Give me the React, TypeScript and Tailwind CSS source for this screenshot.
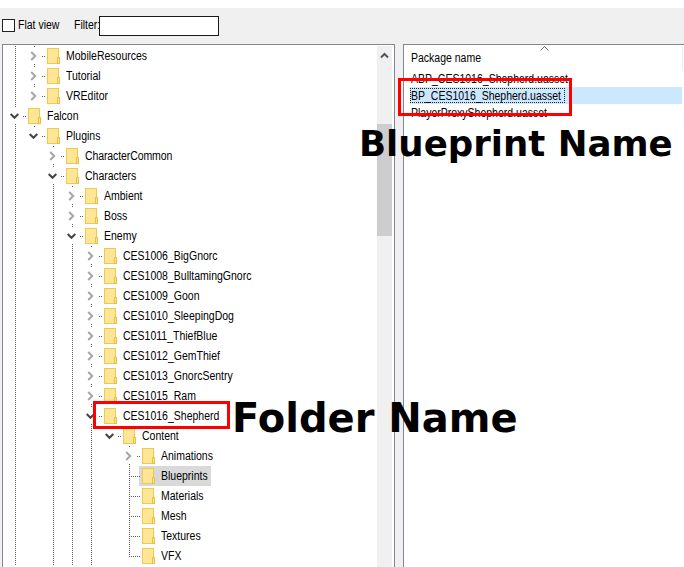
import React from "react";

type Guide = "none" | "line" | "branch" | "last";
type Node = {
  name: string;
  guides: Guide[];
  state: "open" | "closed" | "leaf";
  tracking?: string;
  selected?: boolean;
};

const n: Guide = "none";
const l: Guide = "line";
const b: Guide = "branch";
const e: Guide = "last";

const nodes: Node[] = [
  { name: "MobileResources", guides: [l, b], state: "closed" },
  { name: "Tutorial", guides: [l, b], state: "closed" },
  { name: "VREditor", guides: [l, e], state: "closed" },
  { name: "Falcon", guides: [b], state: "open" },
  { name: "Plugins", guides: [l, e], state: "open" },
  { name: "CharacterCommon", guides: [l, n, b], state: "closed", tracking: "tracking-[-0.12px]" },
  { name: "Characters", guides: [l, n, b], state: "open" },
  { name: "Ambient", guides: [l, n, l, b], state: "closed" },
  { name: "Boss", guides: [l, n, l, b], state: "closed" },
  { name: "Enemy", guides: [l, n, l, b], state: "open" },
  { name: "CES1006_BigGnorc", guides: [l, n, l, l, b], state: "closed" },
  { name: "CES1008_BulltamingGnorc", guides: [l, n, l, l, b], state: "closed" },
  { name: "CES1009_Goon", guides: [l, n, l, l, b], state: "closed" },
  { name: "CES1010_SleepingDog", guides: [l, n, l, l, b], state: "closed" },
  { name: "CES1011_ThiefBlue", guides: [l, n, l, l, b], state: "closed" },
  { name: "CES1012_GemThief", guides: [l, n, l, l, b], state: "closed" },
  { name: "CES1013_GnorcSentry", guides: [l, n, l, l, b], state: "closed" },
  { name: "CES1015_Ram", guides: [l, n, l, l, b], state: "closed" },
  { name: "CES1016_Shepherd", guides: [l, n, l, l, b], state: "open" },
  { name: "Content", guides: [l, n, l, l, l, e], state: "open" },
  { name: "Animations", guides: [l, n, l, l, l, n, b], state: "closed" },
  { name: "Blueprints", guides: [l, n, l, l, l, n, b], state: "leaf", selected: true },
  { name: "Materials", guides: [l, n, l, l, l, n, b], state: "leaf" },
  { name: "Mesh", guides: [l, n, l, l, l, n, b], state: "leaf" },
  { name: "Textures", guides: [l, n, l, l, l, n, b], state: "leaf" },
  { name: "VFX", guides: [l, n, l, l, l, n, e], state: "leaf" },
];

function Label({ children, className = "" }: { children: string; className?: string }) {
  return (
    <span className={`inline-block origin-left scale-x-[0.84] whitespace-pre ${className}`}>{children}</span>
  );
}

function Folder() {
  return (
    <svg className="block shrink-0" width="13" height="16" viewBox="0 0 13 16" shapeRendering="crispEdges">
      <rect x="0.5" y="0.5" width="11" height="15" fill="#ffe696" stroke="#efca4d" />
      <rect x="10.5" y="9.5" width="2" height="6" fill="#ffe391" stroke="#e9c142" />
    </svg>
  );
}

function GuideCell({ guide, state }: { guide: Guide; state?: Node["state"] }) {
  const dash = { stroke: "#5c5c5c", strokeDasharray: "1 1" };
  return (
    <svg className="block shrink-0" width="19" height="20" viewBox="0 0 19 20">
      {guide === "line" || (guide === "branch" && state === "leaf") ? (
        <path d="M9.5 0V20" {...dash} />
      ) : null}
      {guide === "last" && state === "leaf" ? <path d="M9.5 0V11" {...dash} /> : null}
      {state && state !== "leaf" && guide !== "none" ? <path d="M9.5 0V1" {...dash} /> : null}
      {guide === "branch" && state !== "leaf" ? <path d="M9.5 18V20" {...dash} /> : null}
      {state === "leaf" ? <path d="M11 10.5H19" {...dash} /> : null}
      {state === "open" ? <path d="M4.7 8L8.5 11.8L12.3 8" fill="none" stroke="#454545" strokeWidth="2" /> : null}
      {state === "closed" ? <path d="M6.2 6L10.2 10L6.2 14" fill="none" stroke="#a6a6a6" strokeWidth="2" /> : null}
      {state && state !== "leaf" ? <path d="M17 10.5H19" {...dash} /> : null}
    </svg>
  );
}

function TreeRow({ node }: { node: Node }) {
  const last = node.guides.length - 1;
  return (
    <div className="flex h-5 shrink-0 items-center pl-[3px]">
      {node.guides.map((g, i) => (
        <GuideCell key={i} guide={g} state={i === last ? node.state : undefined} />
      ))}
      <div className={`flex h-5 items-center ${node.selected ? "w-[72px] bg-[#d9d9d9]" : ""}`}>
        <svg className="block shrink-0" width="3" height="20">
          <path d="M0 10.5H2" stroke="#5c5c5c" strokeDasharray="1 1" />
        </svg>
        <Folder />
        <Label className={`ml-1.5 leading-5 ${node.tracking ?? ""}`}>{node.name}</Label>
      </div>
    </div>
  );
}

export default function App() {
  return (
    <div className="relative flex h-[567px] w-[684px] flex-col overflow-hidden bg-[#f0f0f0] font-['Liberation_Sans',sans-serif] text-[12.5px] text-black">
      <div className="h-2 shrink-0 bg-white" />
      <div className="flex h-9 shrink-0 items-center pl-0.5">
        <div className="mb-0.5 size-[13px] shrink-0 border border-[#222] bg-white" />
        <div className="mb-0.5 ml-[3px] w-[56px] shrink-0">
          <Label>Flat view</Label>
        </div>
        <div className="mb-0.5 w-[25px] shrink-0">
          <Label>Filter:</Label>
        </div>
        <div className="h-5 w-[120px] border border-[#1b1b1b] bg-white" />
      </div>
      <div className="flex min-h-0 flex-1">
        <div className="ml-0.5 flex w-[393px] shrink-0 overflow-hidden border-x border-t border-[#828790] bg-white">
          <div className="flex w-[374px] shrink-0 flex-col pt-px">
            {nodes.map((node) => (
              <TreeRow key={node.name} node={node} />
            ))}
          </div>
          <div className="mt-px flex w-[15px] shrink-0 flex-col bg-[#f0f0f0]">
            <svg className="block h-[78px] shrink-0" width="15" height="78">
              <path d="M4 11.5L7.5 8L11 11.5" fill="none" stroke="#555" strokeWidth="2" />
            </svg>
            <div className="h-[112px] bg-[#cdcdcd]" />
          </div>
        </div>
        <div className="ml-2 flex min-w-0 flex-1 flex-col border-l border-t border-[#828790] bg-white">
          <div className="flex h-[25px] shrink-0 pl-[7px]">
            <div className="w-[129px] pt-px leading-[25px]">
              <Label>Package name</Label>
            </div>
            <svg className="block" width="10" height="8">
              <path d="M0.5 5.5L4.5 1.5L8.5 5.5" fill="none" stroke="#666" />
            </svg>
            <div className="ml-auto mr-px w-px bg-[#e5f0f8]" />
          </div>
          <div className="h-[17px] pl-[7px] leading-[18px]">
            <Label>ABP_CES1016_Shepherd.uasset</Label>
          </div>
          <div className="ml-1.5 mr-0.5 flex h-[17px] items-center bg-[#cce8ff]">
            <div className="h-[15px] w-[155px] border border-dotted border-[#222] leading-[14px]">
              <Label>BP_CES1016_Shepherd.uasset</Label>
            </div>
          </div>
          <div className="h-[17px] pl-[7px] leading-[18px]">
            <Label>PlayerProxyShepherd.uasset</Label>
          </div>
        </div>
      </div>
      <div className="absolute left-[93px] top-[401px] h-[28px] w-[137px] border-3 border-[#ff0000]" />
      <div className="absolute left-[398px] top-[78px] h-[38px] w-[174px] border-3 border-[#ff0000]" />
      <div className="absolute left-[359px] top-[122px] whitespace-pre font-['DejaVu_Sans',sans-serif] text-[35.6px] font-bold leading-[44px]">
        Blueprint Name
      </div>
      <div className="absolute left-[232px] top-[394px] whitespace-pre font-['DejaVu_Sans',sans-serif] text-[40px] font-bold leading-[48px]">
        Folder Name
      </div>
    </div>
  );
}
